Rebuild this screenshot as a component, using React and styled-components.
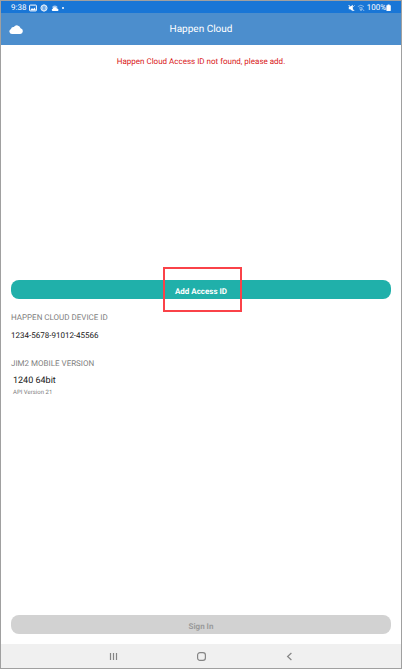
import React from "react";
import styled, { createGlobalStyle } from "styled-components";

const App = () => {
  return (
    <>
      <GlobalStyle />
      <Screen>
        <StatusBar>
          <StatusGroup>
            <span>9:38</span>
            <PictureIcon />
            <GlobeIcon />
            <WeatherIcon />
            <Dot />
          </StatusGroup>
          <StatusGroup $tight>
            <MuteIcon />
            <WifiIcon />
            <Battery>
              <span>100%</span>
              <BatteryIcon />
            </Battery>
          </StatusGroup>
        </StatusBar>
        <Header>
          <CloudIcon />
          <h1>Happen Cloud</h1>
        </Header>
        <Content>
          <MessageArea>
            <p>Happen Cloud Access ID not found, please add.</p>
          </MessageArea>
          <ButtonWrap>
            <ActionButton type="button">Add Access ID</ActionButton>
            <Highlight />
          </ButtonWrap>
          <Details>
            <Label>HAPPEN CLOUD DEVICE ID</Label>
            <DeviceId>1234-5678-91012-45566</DeviceId>
            <Label>JIM2 MOBILE VERSION</Label>
            <Version>
              <strong>1240 64bit</strong>
              <small>API Version 21</small>
            </Version>
          </Details>
          <ActionButton type="button" disabled>
            Sign In
          </ActionButton>
        </Content>
        <NavBar>
          <NavButton type="button" aria-label="Recent apps">
            <svg width="10" height="10" viewBox="0 0 10 10">
              <path d="M2.5 2v7M5.5 2v7M8.5 2v7" />
            </svg>
          </NavButton>
          <NavButton type="button" aria-label="Home">
            <svg width="10" height="10" viewBox="0 0 10 10">
              <rect x="1.6" y="1.6" width="7.8" height="7.8" rx="2.4" />
            </svg>
          </NavButton>
          <NavButton type="button" aria-label="Back">
            <svg width="10" height="10" viewBox="0 0 10 10">
              <path d="M7.4 2L3.6 5.5L7.4 9" />
            </svg>
          </NavButton>
        </NavBar>
      </Screen>
    </>
  );
};

const PictureIcon = () => (
  <svg width="8" height="8" viewBox="0 0 8 8">
    <rect x="0.6" y="1.1" width="6.8" height="5.8" rx="0.6" fill="none" stroke="#fff" />
    <path d="M1.2 6.2L3 4L4.2 5.2L5.4 3.6L7 6.2Z" fill="#fff" />
  </svg>
);

const GlobeIcon = () => (
  <svg width="8" height="8" viewBox="0 0 8 8" fill="none" stroke="#fff">
    <circle cx="4" cy="4" r="3.1" strokeWidth="0.9" />
    <ellipse cx="4" cy="4" rx="1.4" ry="3.1" strokeWidth="0.6" />
    <path d="M1 3h6M1 5h6" strokeWidth="0.6" />
  </svg>
);

const WeatherIcon = () => (
  <svg width="8" height="8" viewBox="0 0 8 8" fill="#fff">
    <path d="M1 3.6a3 2.6 0 0 1 5.8 -0.4L4 4.6Z" opacity="0.6" />
    <path d="M1.6 7a1.2 1.2 0 0 1 0-2.3A2.4 2.2 0 0 1 6 4.4A1.4 1.4 0 0 1 6.8 7Z" />
  </svg>
);

const MuteIcon = () => (
  <svg width="7" height="8" viewBox="0 0 7 8">
    <path d="M0.8 2.8h1.4L4.8 0.8v6.4L2.2 5.2H0.8Z" fill="#fff" />
    <path d="M0.6 1L6.2 7M5.4 2.6L6.4 1.6" stroke="#fff" strokeWidth="1" />
  </svg>
);

const WifiIcon = () => (
  <svg width="8" height="8" viewBox="0 0 8 8" fill="none" stroke="#8fbdec" strokeWidth="0.9">
    <path d="M0.8 2.6a4.6 4.6 0 0 1 6.2 0M2 4.2a3 3 0 0 1 3.8 0" />
    <path d="M3 5.2h2L4 6.8Z" fill="#8fbdec" />
    <path d="M4.6 4.2L7.2 7" />
  </svg>
);

const BatteryIcon = () => (
  <svg width="5" height="8" viewBox="0 0 5 8">
    <path d="M1.6 0.4h2v0.8h0.8a0.4 0.4 0 0 1 0.4 0.4v5a0.4 0.4 0 0 1-0.4 0.4h-3.6a0.4 0.4 0 0 1-0.4-0.4V1.6a0.4 0.4 0 0 1 0.4-0.4h0.8Z" fill="#fff" />
  </svg>
);

const CloudIcon = () => (
  <svg width="14" height="10" viewBox="0 0 14 10">
    <path
      d="M3 9A2.6 2.6 0 0 1 2 4A2.5 2.5 0 0 1 4.8 2A3.8 3.8 0 0 1 11.6 3.2A2.95 2.95 0 0 1 11.2 9Z"
      fill="#fff"
    />
  </svg>
);

const GlobalStyle = createGlobalStyle`
  * {
    box-sizing: border-box;
  }

  body {
    margin: 0;
    font-family: Roboto, "Liberation Sans", sans-serif;
    font-size: 8px;
    line-height: 12px;
    text-rendering: geometricPrecision;
  }

  h1,
  h2,
  p {
    margin: 0;
    font-weight: normal;
  }

  svg {
    display: block;
    flex-shrink: 0;
  }
`;

const Screen = styled.div`
  display: flex;
  flex-direction: column;
  min-height: 100vh;
  border: 1px solid #a0a0a0;
  background-color: #fff;
`;

const StatusBar = styled.div`
  display: flex;
  justify-content: space-between;
  height: 12px;
  padding: 1px 10px 0;
  color: #fff;
  background-color: #1976d6;
`;

const StatusGroup = styled.div`
  display: flex;
  align-items: center;
  gap: ${({ $tight }) => ($tight ? "2px" : "3px")};
`;

const Battery = styled.div`
  display: flex;
  align-items: center;
`;

const Dot = styled.span`
  width: 2px;
  height: 2px;
  border-radius: 50%;
  background-color: #fff;
`;

const Header = styled.header`
  display: grid;
  grid-template-columns: 14px 1fr 14px;
  align-items: center;
  height: 32px;
  padding: 1px 8px 0;
  color: #fff;
  background-color: #4c8ecd;

  h1 {
    font-size: 10px;
    line-height: 14px;
    text-align: center;
  }
`;

const Content = styled.main`
  display: flex;
  flex: 1;
  flex-direction: column;
  padding: 0 10px 10px;
`;

const MessageArea = styled.div`
  flex: 20 0 0;
  padding-top: 11px;
  color: #d92020;
  text-align: center;
`;

const ButtonWrap = styled.div`
  position: relative;
`;

const ActionButton = styled.button`
  display: block;
  width: 100%;
  height: 19px;
  padding: 4px 0 0;
  border: none;
  border-radius: 8px;
  color: #fff;
  background-color: #20b0aa;
  font-family: inherit;
  font-size: 8px;
  font-weight: bold;
  line-height: 12px;
  text-rendering: inherit;
  cursor: pointer;

  &:disabled {
    color: #9a9a9a;
    background-color: #d2d2d2;
    cursor: default;
  }
`;

const Highlight = styled.div`
  position: absolute;
  top: -13px;
  left: calc(50% - 38px);
  width: 79px;
  height: 45px;
  border: 2px solid #fa4248;
  pointer-events: none;
`;

const Details = styled.section`
  flex: 27 0 0;
  padding-top: 13px;
`;

const Label = styled.h2`
  color: #808080;
  font-size: 8px;
`;

const DeviceId = styled.p`
  margin: 6px 0 16px;
  color: #202020;
`;

const Version = styled.div`
  display: flex;
  flex-direction: column;
  margin-top: 5px;
  padding-left: 2px;

  strong {
    color: #202020;
    font-size: 9px;
    font-weight: normal;
  }

  small {
    color: #808080;
    font-size: 6px;
  }
`;

const NavBar = styled.nav`
  display: flex;
  justify-content: center;
  gap: 68px;
  height: 24px;
  background-color: #f0f0f0;
`;

const NavButton = styled.button`
  display: flex;
  align-items: center;
  justify-content: center;
  width: 20px;
  padding: 0;
  border: none;
  background: none;
  cursor: pointer;

  svg {
    fill: none;
    stroke: #858585;
    stroke-width: 1.2;
  }
`;

export default App;
